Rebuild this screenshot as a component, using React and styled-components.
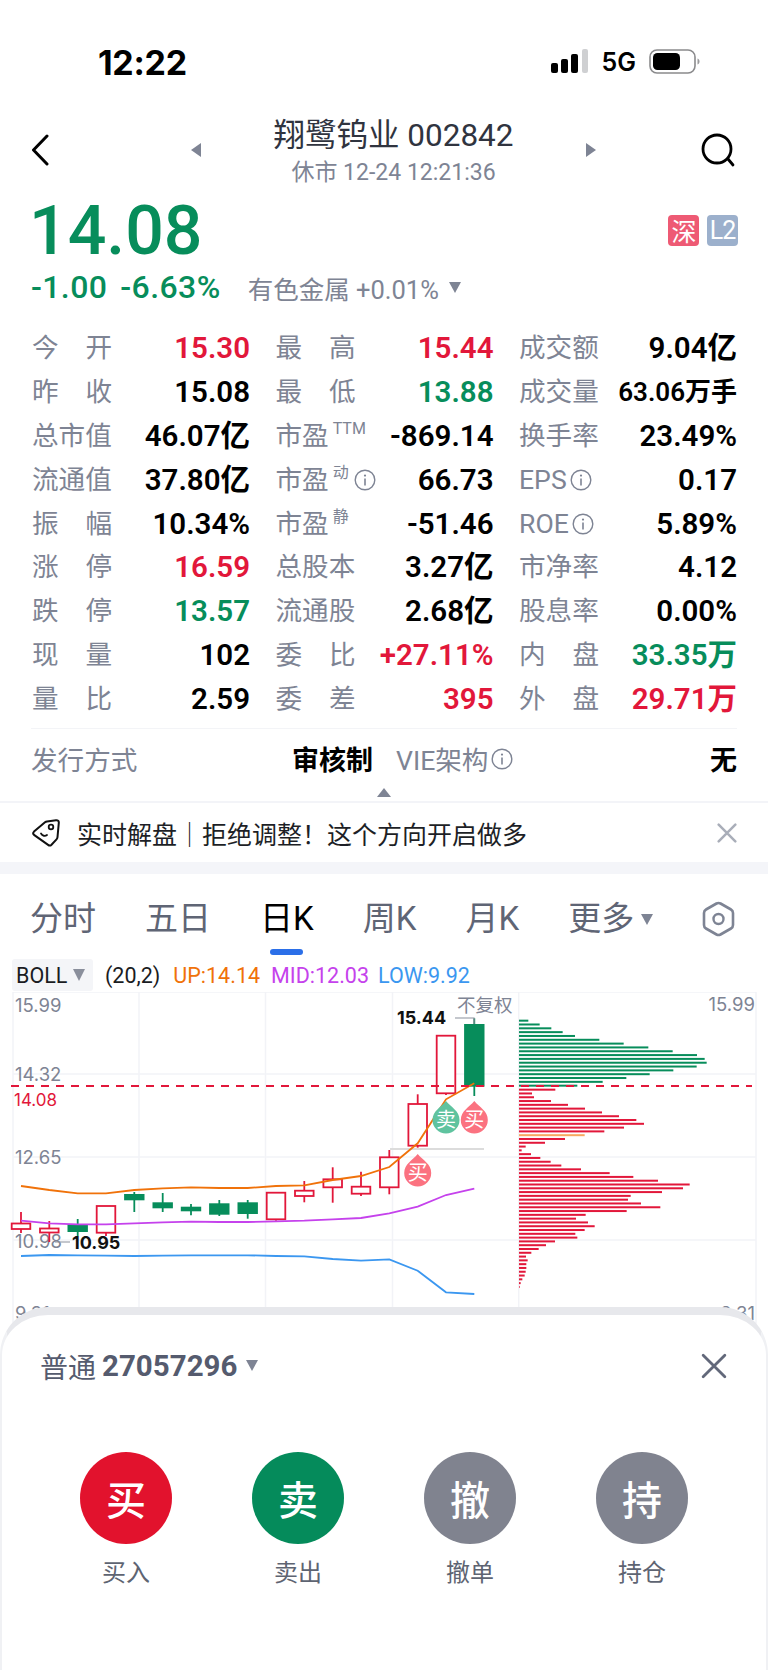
import React from "react";
import styled, { createGlobalStyle } from "styled-components";

const RED = "#e2173a";
const GREEN = "#078d5b";
const GREY = "#7e8494";

const GlobalStyle = createGlobalStyle`
  html, body {
    margin: 0;
    padding: 0;
    background: #fff;
  }
  body {
    font-family: Roboto, "Noto Sans CJK SC", sans-serif;
  }
`;

const stats = [
  [
    { label: "今开", value: "15.30", color: RED, spaced: true },
    { label: "最高", value: "15.44", color: RED, spaced: true },
    { label: "成交额", value: "9.04亿" },
  ],
  [
    { label: "昨收", value: "15.08", spaced: true },
    { label: "最低", value: "13.88", color: GREEN, spaced: true },
    { label: "成交量", value: "63.06万手", small: true },
  ],
  [
    { label: "总市值", value: "46.07亿" },
    { label: "市盈", sup: "TTM", value: "-869.14" },
    { label: "换手率", value: "23.49%" },
  ],
  [
    { label: "流通值", value: "37.80亿" },
    { label: "市盈", sup: "动", info: true, value: "66.73" },
    { label: "EPS", info: true, value: "0.17" },
  ],
  [
    { label: "振幅", value: "10.34%", spaced: true },
    { label: "市盈", sup: "静", value: "-51.46" },
    { label: "ROE", info: true, value: "5.89%" },
  ],
  [
    { label: "涨停", value: "16.59", color: RED, spaced: true },
    { label: "总股本", value: "3.27亿" },
    { label: "市净率", value: "4.12" },
  ],
  [
    { label: "跌停", value: "13.57", color: GREEN, spaced: true },
    { label: "流通股", value: "2.68亿" },
    { label: "股息率", value: "0.00%" },
  ],
  [
    { label: "现量", value: "102", spaced: true },
    { label: "委比", value: "+27.11%", color: RED, spaced: true },
    { label: "内盘", value: "33.35万", color: GREEN, spaced: true },
  ],
  [
    { label: "量比", value: "2.59", spaced: true },
    { label: "委差", value: "395", color: RED, spaced: true },
    { label: "外盘", value: "29.71万", color: RED, spaced: true },
  ],
];

const tabs = ["分时", "五日", "日K", "周K", "月K"];

const actions = [
  { glyph: "买", label: "买入", color: "#e2122d" },
  { glyph: "卖", label: "卖出", color: "#058b5b" },
  { glyph: "撤", label: "撤单", color: "#80838f" },
  { glyph: "持", label: "持仓", color: "#80838f" },
];

// x, wick top, wick bottom, body top, body bottom, up
const candles = [
  [21, 1212, 1233, 1223.5, 1229, true],
  [49.3, 1221, 1242, 1228.5, 1232.5, true],
  [77.7, 1219, 1236, 1224, 1232, false],
  [106, 1206, 1236, 1206, 1232.7, true],
  [134.3, 1192, 1212, 1194, 1200.3, false],
  [162.7, 1193, 1212, 1202.3, 1208.3, false],
  [191, 1204, 1215.3, 1206.7, 1211.3, false],
  [219.3, 1200, 1216, 1203.3, 1214.7, false],
  [247.7, 1200, 1218.7, 1202.3, 1214, false],
  [276, 1192, 1220.7, 1192.7, 1219.3, true],
  [304.3, 1181, 1202.3, 1190.7, 1196, true],
  [332.7, 1167.3, 1202.7, 1179.3, 1187.3, true],
  [361, 1171.7, 1196, 1186.7, 1193.7, true],
  [389.3, 1150, 1194.3, 1157.3, 1187.3, true],
  [417.7, 1094.3, 1147.7, 1104, 1145.7, true],
  [446, 1036, 1095, 1035.7, 1093.3, true],
  [474.3, 1018.3, 1096, 1024, 1086.7, false],
];

const xs = candles.map((c) => c[0]);
const upLine = [1186, 1190, 1193.3, 1193.3, 1190, 1188.3, 1187.3, 1188, 1188, 1186, 1185.3, 1180, 1176, 1167, 1143.3, 1099.3, 1083.3];
const midLine = [1220.7, 1223.3, 1224.3, 1224.3, 1223.3, 1222.3, 1221.7, 1222, 1222, 1221.3, 1220.7, 1219.3, 1218, 1213.3, 1206.7, 1195, 1188.7];
const lowLine = [1256, 1255, 1255.3, 1255.7, 1256, 1255.7, 1255.3, 1255.3, 1255.3, 1256, 1256.3, 1259, 1260.7, 1259.3, 1270.7, 1292.3, 1294];
const toPoints = (line) => line.map((y, i) => `${xs[i]},${y}`).join(" ");

// volume profile, bar ends measured along the row
const greenBars = [505, 539, 574, 608, 645, 718, 791, 865, 938, 1011, 1034, 1040, 1010, 940, 869, 799, 728, 652];
const redBars = [586, 516, 522, 573, 624, 675, 726, 777, 829, 852, 792, 733, 674, 615, 555, 497, 485, 513, 541, 572, 604, 663, 749, 820, 894, 989, 969, 906, 812, 804, 843, 901, 800, 677, 648, 684, 704, 674, 646, 652, 585, 558, 536, 514, 498, 503, 499, 499, 497, 494, 487, 482, 479];

const Page = styled.div`
  position: relative;
  width: 768px;
  height: 1670px;
  overflow: hidden;
  background: #fff;
`;

const StatusBar = styled.div`
  height: 117px;
  padding: 49px 68px 0 98px;
  box-sizing: border-box;
  display: flex;
  justify-content: space-between;
  align-items: flex-start;
`;

const Clock = styled.span`
  font-family: Inter, sans-serif;
  font-size: 34px;
  font-weight: 700;
  line-height: 27px;
  color: #000;
  letter-spacing: -0.3px;
`;

const StatusIcons = styled.div`
  display: flex;
  align-items: center;
  gap: 13px;
  height: 26px;
`;

const Network = styled.span`
  font-family: Inter, sans-serif;
  font-size: 25px;
  font-weight: 600;
  color: #000;
`;

const Header = styled.div`
  height: 66px;
  padding: 0 33px 0 31px;
  display: grid;
  grid-template-columns: 160px 10px 1fr 10px 139px;
  grid-template-rows: 66px;
  align-items: center;
`;

const TitleBlock = styled.div`
  text-align: center;
  margin-top: 3px;
`;

const Title = styled.div`
  font-size: 31.5px;
  line-height: 38px;
  color: #30343f;
`;

const SubTitle = styled.div`
  font-size: 23px;
  line-height: 26px;
  color: ${GREY};
  margin-top: 5px;
`;

const Caret = styled.span`
  display: block;
  width: 0;
  height: 0;
  border-style: solid;
  border-color: transparent;
  border-width: ${(p) => p.$h / 2}px ${(p) => p.$w}px;
  border-left-width: ${(p) => (p.$dir === "right" ? p.$w : 0)}px;
  border-right-width: ${(p) => (p.$dir === "left" ? p.$w : 0)}px;
  border-left-color: ${(p) => (p.$dir === "right" ? p.$color : "transparent")};
  border-right-color: ${(p) => (p.$dir === "left" ? p.$color : "transparent")};
`;

const CaretV = styled.span`
  display: inline-block;
  width: 0;
  height: 0;
  border-left: ${(p) => p.$w / 2}px solid transparent;
  border-right: ${(p) => p.$w / 2}px solid transparent;
  ${(p) => (p.$up ? "border-bottom" : "border-top")}: ${(p) => p.$h}px solid ${(p) => p.$color};
`;

const SearchSlot = styled.div`
  display: flex;
  justify-content: flex-end;
`;

const PriceRow = styled.div`
  height: 77px;
  padding: 19px 30px 0 29px;
  box-sizing: border-box;
  display: flex;
  justify-content: space-between;
  align-items: center;
`;

const Price = styled.div`
  font-size: 68px;
  line-height: 56px;
  font-weight: 500;
  color: ${GREEN};
`;

const Badges = styled.div`
  display: flex;
  gap: 8px;
  margin-top: -2px;
`;

const Badge = styled.span`
  width: 31px;
  height: 31px;
  border-radius: 4px;
  display: flex;
  align-items: center;
  justify-content: center;
  color: #fff;
  font-size: 25px;
  letter-spacing: -1px;
  background: ${(p) => p.$bg};
`;

const ChangeRow = styled.div`
  height: 66px;
  padding: 0 31px 12px;
  box-sizing: border-box;
  display: flex;
  align-items: center;
`;

const Change = styled.span`
  font-size: 32px;
  font-weight: 500;
  color: ${GREEN};
  letter-spacing: 0.4px;
  margin-right: ${(p) => p.$gap}px;
`;

const Sector = styled.span`
  font-size: 25.5px;
  color: ${GREY};
  margin-right: 10px;
`;

const StatGrid = styled.div`
  padding: 0 31px 0 32px;
  display: grid;
  grid-template-columns: 218px 218px 218px;
  grid-auto-rows: 43.9px;
  column-gap: 25.5px;
  align-items: center;
`;

const Cell = styled.div`
  display: flex;
  justify-content: space-between;
  align-items: center;
`;

const Label = styled.span`
  position: relative;
  display: flex;
  align-items: center;
  width: ${(p) => (p.$fit ? "auto" : "80px")};
  justify-content: ${(p) => (p.$spaced ? "space-between" : "flex-start")};
  font-size: 26.6px;
  line-height: 32px;
  color: ${GREY};
  white-space: nowrap;
`;

const Sup = styled.span`
  font-size: 16px;
  line-height: 16px;
  margin: -14px 2px 0 4px;
`;

const Value = styled.span`
  font-size: ${(p) => (p.$small ? 26 : 29.5)}px;
  line-height: 32px;
  font-weight: 600;
  color: ${(p) => p.$color || "#000"};
  white-space: nowrap;
`;

const IpoRow = styled.div`
  position: relative;
  margin: 7px 31px 0;
  border-top: 1px solid #f3f4f7;
  height: 73px;
  display: flex;
  align-items: center;
  padding-bottom: 13px;
  box-sizing: border-box;
`;

const IpoLabel = styled.span`
  font-size: 26.6px;
  color: ${GREY};
  width: 261px;
  display: flex;
  align-items: center;
  &:nth-of-type(3) {
    width: auto;
    margin-left: 23px;
  }
`;

const IpoValue = styled.span`
  font-size: 27px;
  font-weight: 700;
  color: #000;
  margin-left: ${(p) => (p.$end ? "auto" : "0")};
`;

const Expand = styled.div`
  position: absolute;
  left: 346px;
  bottom: 4px;
  line-height: 0;
`;

const Banner = styled.div`
  height: 59px;
  border-top: 2px solid #f3f4f8;
  border-bottom: 12px solid #f4f5f9;
  padding: 0 31px 0 32px;
  display: flex;
  align-items: center;
  gap: 17px;
`;

const BannerText = styled.span`
  flex: 1;
  font-size: 25px;
  color: #1d1f26;
`;

const Tabs = styled.div`
  height: 82px;
  padding: 8px 33px 0 30px;
  box-sizing: border-box;
  display: flex;
  align-items: center;
  gap: 49px;
`;

const Tab = styled.div`
  position: relative;
  flex-shrink: 0;
  white-space: nowrap;
  font-size: 33px;
  line-height: 40px;
  color: ${(p) => (p.$active ? "#000" : "#5f6575")};
  display: flex;
  align-items: center;
  &::after {
    content: "";
    display: ${(p) => (p.$active ? "block" : "none")};
    position: absolute;
    left: 10px;
    right: 11px;
    top: 50px;
    height: 6px;
    border-radius: 3px;
    background: #2b6fe8;
  }
`;

const TabMore = styled(Tab)`
  gap: 7px;
`;

const TabIcon = styled.div`
  margin-left: auto;
  line-height: 0;
`;

const IndicatorRow = styled.div`
  height: 34px;
  padding: 0 0 0 12px;
  margin-top: 2px;
  box-sizing: border-box;
  display: flex;
  align-items: center;
  font-size: 21.5px;
`;

const IndicatorPicker = styled.div`
  width: 81px;
  height: 32px;
  padding-left: 4px;
  box-sizing: border-box;
  display: flex;
  align-items: center;
  gap: 6px;
  background: #f4f5f8;
  border-radius: 3px;
  color: #1a1c22;
`;

const IndicatorText = styled.span`
  color: ${(p) => p.$color};
  margin-left: ${(p) => p.$gap}px;
`;

const ChartSvg = styled.svg`
  display: block;
  font-family: Inter, "Noto Sans CJK SC", sans-serif;
`;

const Sheet = styled.div`
  position: absolute;
  left: 0;
  right: 0;
  top: 1307px;
  bottom: 0;
  background: #fff;
  border-top: 8px solid #e7e8ec;
  border-left: 2px solid #f0f1f4;
  border-right: 2px solid #f0f1f4;
  border-radius: 48px 48px 0 0;
`;

const SheetHead = styled.div`
  height: 84px;
  padding: 8.5px 39px 0 38px;
  display: flex;
  align-items: center;
  font-size: 28px;
  color: #555b6e;
`;

const Account = styled.span`
  font-size: 29.5px;
  font-weight: 700;
  margin: 0 9px 0 6px;
`;

const CloseSlot = styled.div`
  margin-left: auto;
  line-height: 0;
`;

const Actions = styled.div`
  margin-top: 44.5px;
  padding: 0 38px;
  display: grid;
  grid-template-columns: repeat(4, 172px);
`;

const Action = styled.div`
  display: flex;
  flex-direction: column;
  align-items: center;
`;

const ActionCircle = styled.div`
  width: 92px;
  height: 92px;
  border-radius: 50%;
  background: ${(p) => p.$bg};
  color: #fff;
  font-size: 40px;
  font-weight: 500;
  display: flex;
  align-items: center;
  justify-content: center;
`;

const ActionLabel = styled.div`
  margin-top: 13px;
  font-size: 24px;
  line-height: 32px;
  color: #5e6472;
`;

const InfoIcon = ({ size = 22 }) => (
  <svg width={size} height={size} viewBox="0 0 22 22" style={{ marginLeft: 3 }}>
    <circle cx="11" cy="11" r="9.8" fill="none" stroke="#7e8494" strokeWidth="1.4" />
    <rect x="10.2" y="9.5" width="1.6" height="7" fill="#7e8494" />
    <circle cx="11" cy="6.6" r="1.1" fill="#7e8494" />
  </svg>
);

const Signal = () => (
  <svg width="38" height="26" viewBox="0 0 38 26">
    <rect x="0" y="14" width="7" height="10" rx="2" fill="#000" />
    <rect x="10" y="10" width="7" height="14" rx="2" fill="#000" />
    <rect x="20" y="5" width="7" height="19" rx="2" fill="#000" />
    <rect x="31" y="0" width="6" height="24" rx="2" fill="#cfd0d2" />
  </svg>
);

const Battery = () => (
  <svg width="51" height="26" viewBox="0 0 51 26">
    <rect x="1" y="1" width="45" height="23" rx="7" fill="none" stroke="#8a8a8c" strokeWidth="1.6" />
    <rect x="4" y="4" width="27" height="17" rx="4.5" fill="#000" />
    <path d="M48.5 9.5c1.5.6 2 1.8 2 3s-.5 2.4-2 3z" fill="#9a9a9c" />
  </svg>
);

const BackIcon = () => (
  <svg width="18" height="32" viewBox="0 0 18 32">
    <path d="M16 2 2.5 16 16 30" fill="none" stroke="#000" strokeWidth="3" strokeLinecap="round" strokeLinejoin="round" />
  </svg>
);

const SearchIcon = () => (
  <svg width="34" height="34" viewBox="0 0 34 34">
    <circle cx="16" cy="16" r="14" fill="none" stroke="#000" strokeWidth="2.8" />
    <path d="m27 26 5 6" fill="none" stroke="#000" strokeWidth="2.8" strokeLinecap="round" />
  </svg>
);

const TagIcon = () => (
  <svg width="28" height="28" viewBox="0 0 28 28" style={{ flexShrink: 0 }}>
    <path
      d="M15 2.4 24 1.2c1.8-.2 3 1 2.8 2.6l-1.3 14.4c-.1.9-.4 1.6-1 2.2l-5 5.3c-1 1-2.400 1-3.400.2L2 15.900c-1-1-1-2.300 0-3.300l11-9.300c.6-.5 1.200-.800 2-.900z"
      fill="none"
      stroke="#111"
      strokeWidth="2"
      strokeLinejoin="round"
    />
    <circle cx="19" cy="8" r="2.300" fill="none" stroke="#111" strokeWidth="1.800" />
    <path d="M9 14.500c1.500 2.500 4 3 6 1.500" fill="none" stroke="#111" strokeWidth="1.800" strokeLinecap="round" />
  </svg>
);

const CloseIcon = ({ size, color, weight }) => (
  <svg width={size} height={size} viewBox="0 0 24 24">
    <path d="M2 2 22 22M22 2 2 22" fill="none" stroke={color} strokeWidth={weight} strokeLinecap="round" />
  </svg>
);

const HexIcon = () => (
  <svg width="33" height="36" viewBox="0 0 33 36">
    <path
      d="M14.500 2.500c1.300-.7 2.700-.7 4 0l10.500 6c1.300.7 2 2 2 3.500v12c0 1.500-.7 2.800-2 3.500l-10.500 6c-1.300.7-2.700.7-4 0L4 27.500C2.700 26.800 2 25.500 2 24V12c0-1.500.7-2.800 2-3.500z"
      fill="none"
      stroke="#7e8494"
      strokeWidth="2.600"
    />
    <circle cx="16.500" cy="18" r="5" fill="none" stroke="#7e8494" strokeWidth="2.400" />
  </svg>
);

const Drop = ({ x, y, color, glyph }) => (
  <g>
    <path
      d={`M${x} ${y - 18} C${x + 5} ${y - 12} ${x + 13.500} ${y - 8} ${x + 13.500} ${y + 1} A13.500 13.500 0 0 1 ${x - 13.500} ${y + 1} C${x - 13.500} ${y - 8} ${x - 5} ${y - 12} ${x} ${y - 18}Z`}
      fill={color}
    />
    <text x={x} y={y + 8} fontSize="20" fill="#fff" textAnchor="middle">
      {glyph}
    </text>
  </g>
);

const Chart = () => (
  <ChartSvg width="768" height="338" viewBox="0 992 768 338">
    <g stroke="#f2f3f7" strokeWidth="1.500" fill="none">
      <rect x="13" y="992" width="743" height="331" />
      <path d="M139 992V1323M265.500 992V1323M392.500 992V1323M518.700 992V1323" />
      <path d="M13 1074H756M13 1157H756M13 1240H756" />
    </g>

    <g fontSize="18.500" fill={GREY}>
      <text x="15" y="1012">15.99</text>
      <text x="15" y="1081">14.32</text>
      <text x="15" y="1164">12.65</text>
      <text x="15" y="1248">10.98</text>
      <text x="15" y="1320">9.31</text>
      <text x="755" y="1011" textAnchor="end">15.99</text>
      <text x="755" y="1320" textAnchor="end">9.31</text>
    </g>
    <text x="14" y="1106" fontSize="17" fill={RED}>14.08</text>

    {candles.map(([x, wickTop, wickBottom, top, bottom, up]) => (
      <g key={x}>
        <line x1={x} x2={x} y1={wickTop} y2={wickBottom} stroke={up ? RED : GREEN} strokeWidth="1.800" />
        {up ? (
          <rect x={x - 9.300} y={top} width="18.600" height={bottom - top} fill="#fff" stroke={RED} strokeWidth="1.800" />
        ) : (
          <rect x={x - 10.200} y={top} width="20.400" height={bottom - top} fill={GREEN} />
        )}
      </g>
    ))}

    <line x1="390" x2="484" y1="1149" y2="1149" stroke="#dcdcdc" strokeWidth="2" />

    <polyline points={toPoints(midLine)} fill="none" stroke="#c542ec" strokeWidth="1.800" />
    <polyline points={toPoints(lowLine)} fill="none" stroke="#3b97f0" strokeWidth="1.800" />
    <polyline points={toPoints(upLine)} fill="none" stroke="#f0720a" strokeWidth="1.800" />

    {greenBars.map((end, i) => (
      <rect key={i} x="519" y={980 + (122 + i * 11.470) / 3 - 1} width={360 + end / 3 - 519} height="2" fill={GREEN} />
    ))}
    {redBars.map((end, i) => (
      <rect
        key={i}
        x="519"
        y={980 + (329 + i * 11.380) / 3 - 1}
        width={360 + end / 3 - 519}
        height="2"
        fill={i === 12 ? "#f8a860" : RED}
      />
    ))}

    <line x1="11" x2="752" y1="1086" y2="1086" stroke={RED} strokeWidth="2" strokeDasharray="8 7" />

    <path d="M55 1242H70M455 1018H474V1024" fill="none" stroke="#8a8f9c" strokeWidth="1.200" />
    <text x="72" y="1249" fontSize="18" fontWeight="700" fill="#111">10.95</text>
    <text x="397" y="1024" fontSize="18" fontWeight="700" fill="#111">15.44</text>
    <text x="457" y="1012" fontSize="18.500" fill={GREY}>不复权</text>

    <Drop x={446} y={1119} color="#5fc39f" glyph="卖" />
    <Drop x={474.300} y={1119} color="#fb7280" glyph="买" />
    <Drop x={417.700} y={1172} color="#fb7280" glyph="买" />
  </ChartSvg>
);

const StatCell = ({ stat }) => (
  <Cell>
    <Label $spaced={stat.spaced} $fit={stat.sup || stat.info}>
      {stat.spaced ? (
        <>
          <span>{stat.label[0]}</span>
          <span>{stat.label[1]}</span>
        </>
      ) : (
        <span>{stat.label}</span>
      )}
      {stat.sup && <Sup>{stat.sup}</Sup>}
      {stat.info && <InfoIcon />}
    </Label>
    <Value $color={stat.color} $small={stat.small}>
      {stat.value}
    </Value>
  </Cell>
);

const App = () => (
  <Page>
    <GlobalStyle />
    <StatusBar>
      <Clock>12:22</Clock>
      <StatusIcons>
        <Signal />
        <Network>5G</Network>
        <Battery />
      </StatusIcons>
    </StatusBar>

    <Header>
      <BackIcon />
      <Caret $dir="left" $w={10} $h={15} $color="#7e8494" />
      <TitleBlock>
        <Title>翔鹭钨业 002842</Title>
        <SubTitle>休市 12-24 12:21:36</SubTitle>
      </TitleBlock>
      <Caret $dir="right" $w={10} $h={15} $color="#7e8494" />
      <SearchSlot>
        <SearchIcon />
      </SearchSlot>
    </Header>

    <PriceRow>
      <Price>14.08</Price>
      <Badges>
        <Badge $bg="#ee5a74">深</Badge>
        <Badge $bg="#9cb0cc">L2</Badge>
      </Badges>
    </PriceRow>

    <ChangeRow>
      <Change $gap={13}>-1.00</Change>
      <Change $gap={27}>-6.63%</Change>
      <Sector>有色金属 +0.01%</Sector>
      <CaretV $w={13} $h={11} $color="#7e8494" />
    </ChangeRow>

    <StatGrid>
      {stats.flat().map((stat) => (
        <StatCell key={stat.label + stat.value} stat={stat} />
      ))}
    </StatGrid>

    <IpoRow>
      <IpoLabel>发行方式</IpoLabel>
      <IpoValue>审核制</IpoValue>
      <IpoLabel>
        VIE架构
        <InfoIcon />
      </IpoLabel>
      <IpoValue $end>无</IpoValue>
      <Expand>
        <CaretV $up $w={14} $h={9} $color="#7e8494" />
      </Expand>
    </IpoRow>

    <Banner>
      <TagIcon />
      <BannerText>实时解盘｜拒绝调整！这个方向开启做多</BannerText>
      <CloseIcon size={20} color="#a9aeb9" weight={3} />
    </Banner>

    <Tabs>
      {tabs.map((tab) => (
        <Tab key={tab} $active={tab === "日K"}>
          {tab}
        </Tab>
      ))}
      <TabMore>
        更多
        <CaretV $w={12} $h={11} $color="#7e8494" />
      </TabMore>
      <TabIcon>
        <HexIcon />
      </TabIcon>
    </Tabs>

    <IndicatorRow>
      <IndicatorPicker>
        BOLL
        <CaretV $w={13} $h={12} $color="#8a8f9c" />
      </IndicatorPicker>
      <IndicatorText $color="#1a1c22" $gap={12}>(20,2)</IndicatorText>
      <IndicatorText $color="#f0720a" $gap={13}>UP:14.14</IndicatorText>
      <IndicatorText $color="#c542ec" $gap={11}>MID:12.03</IndicatorText>
      <IndicatorText $color="#3b97f0" $gap={9}>LOW:9.92</IndicatorText>
    </IndicatorRow>

    <Chart />

    <Sheet>
      <SheetHead>
        普通
        <Account>27057296</Account>
        <CaretV $w={13} $h={11} $color="#7e8494" />
        <CloseSlot>
          <CloseIcon size={26} color="#62687a" weight={2.600} />
        </CloseSlot>
      </SheetHead>
      <Actions>
        {actions.map((action) => (
          <Action key={action.label}>
            <ActionCircle $bg={action.color}>{action.glyph}</ActionCircle>
            <ActionLabel>{action.label}</ActionLabel>
          </Action>
        ))}
      </Actions>
    </Sheet>
  </Page>
);

export default App;
